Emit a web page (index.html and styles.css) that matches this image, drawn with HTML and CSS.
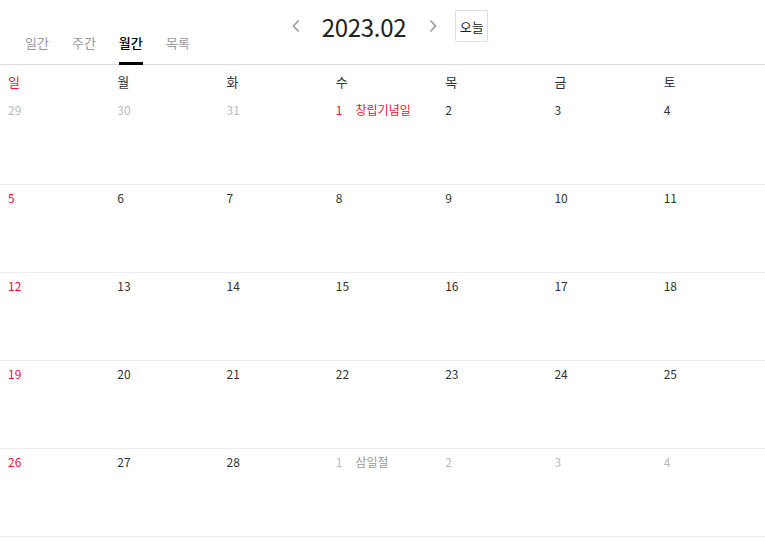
FILE: index.html
```html
<!DOCTYPE html>
<html lang="ko">
<head>
  <meta charset="UTF-8">
  <title>월간 일정</title>
  <link rel="stylesheet" href="styles.css">
</head>
<body>

  <div class="header">
    <ul class="tabs">
      <li class="tab">일간</li>
      <li class="tab">주간</li>
      <li class="tab active">월간</li>
      <li class="tab">목록</li>
    </ul>
    <div class="nav">
      <button class="arrow" aria-label="이전">
        <svg width="10" height="14" viewBox="0 0 10 14"><path d="M7.5 1.5 L2.5 7 L7.5 12.5" fill="none" stroke="#999" stroke-width="1.6"/></svg>
      </button>
      <h2 class="title">2023.02</h2>
      <button class="arrow" aria-label="다음">
        <svg width="10" height="14" viewBox="0 0 10 14"><path d="M2.5 1.5 L7.5 7 L2.5 12.5" fill="none" stroke="#999" stroke-width="1.6"/></svg>
      </button>
      <button class="today">오늘</button>
    </div>
  </div>

  <div class="calendar">
    <div class="week-head">
      <div class="dow sun">일</div>
      <div class="dow">월</div>
      <div class="dow">화</div>
      <div class="dow">수</div>
      <div class="dow">목</div>
      <div class="dow">금</div>
      <div class="dow">토</div>
    </div>

    <div class="week">
      <div class="day other"><span class="num">29</span></div>
      <div class="day other"><span class="num">30</span></div>
      <div class="day other"><span class="num">31</span></div>
      <div class="day holiday"><span class="num">1</span><span class="event">창립기념일</span></div>
      <div class="day"><span class="num">2</span></div>
      <div class="day"><span class="num">3</span></div>
      <div class="day"><span class="num">4</span></div>
    </div>

    <div class="week">
      <div class="day sun"><span class="num">5</span></div>
      <div class="day"><span class="num">6</span></div>
      <div class="day"><span class="num">7</span></div>
      <div class="day"><span class="num">8</span></div>
      <div class="day"><span class="num">9</span></div>
      <div class="day"><span class="num">10</span></div>
      <div class="day"><span class="num">11</span></div>
    </div>

    <div class="week">
      <div class="day sun"><span class="num">12</span></div>
      <div class="day"><span class="num">13</span></div>
      <div class="day"><span class="num">14</span></div>
      <div class="day"><span class="num">15</span></div>
      <div class="day"><span class="num">16</span></div>
      <div class="day"><span class="num">17</span></div>
      <div class="day"><span class="num">18</span></div>
    </div>

    <div class="week">
      <div class="day sun"><span class="num">19</span></div>
      <div class="day"><span class="num">20</span></div>
      <div class="day"><span class="num">21</span></div>
      <div class="day"><span class="num">22</span></div>
      <div class="day"><span class="num">23</span></div>
      <div class="day"><span class="num">24</span></div>
      <div class="day"><span class="num">25</span></div>
    </div>

    <div class="week">
      <div class="day sun"><span class="num">26</span></div>
      <div class="day"><span class="num">27</span></div>
      <div class="day"><span class="num">28</span></div>
      <div class="day other"><span class="num">1</span><span class="event">삼일절</span></div>
      <div class="day other"><span class="num">2</span></div>
      <div class="day other"><span class="num">3</span></div>
      <div class="day other"><span class="num">4</span></div>
    </div>
  </div>

</body>
</html>
```

FILE: styles.css
```css
body {
  margin: 0;
  font-family: "Noto Sans CJK KR", "Noto Sans", sans-serif;
  color: #333;
  background-color: #fff;
}

.header {
  display: flex;
  align-items: stretch;
  height: 64px;
  border-bottom: 1px solid #ddd;
  padding-left: 25px;
}

.tabs {
  display: flex;
  gap: 23px;
  list-style: none;
  margin: 0;
  padding: 0;
  align-self: flex-end;
}

.tab {
  font-size: 13px;
  color: #999;
  line-height: 18px;
  padding: 0 0 10px;
  margin-bottom: -1px;
  border-bottom: 3px solid transparent;
}

.tab.active {
  color: #000;
  font-weight: 500;
  border-bottom-color: #000;
}

.nav {
  display: flex;
  align-items: center;
  margin-left: 101px;
  height: 52px;
}

.arrow {
  border: none;
  background: none;
  padding: 0;
  width: 10px;
  height: 14px;
  display: flex;
}

.title {
  margin: 0 22px 0 21px;
  font-size: 24px;
  font-weight: normal;
  color: #222;
  letter-spacing: -0.3px;
}

.today {
  margin-left: 17px;
  width: 33px;
  height: 32px;
  padding: 0;
  border: 1px solid #ddd;
  border-radius: 2px;
  background: #fff;
  font-family: inherit;
  font-size: 13px;
  color: #222;
}

.week-head,
.week {
  display: grid;
  grid-template-columns: repeat(7, 1fr);
}

.week-head {
  height: 32px;
  align-items: center;
}

.dow {
  font-size: 13px;
  padding-left: 8px;
  color: #333;
}

.dow.sun {
  color: #f0132f;
}

.week {
  height: 87px;
  border-bottom: 1px solid #ececec;
}

.day {
  padding: 5px 0 0 8px;
  font-size: 12px;
  line-height: 16px;
  color: #333;
}

.day.sun,
.day.holiday {
  color: #f0132f;
}

.day.other .num {
  color: #bbb;
}

.day.other .event {
  color: #999;
}

.event {
  margin-left: 13px;
}
```
